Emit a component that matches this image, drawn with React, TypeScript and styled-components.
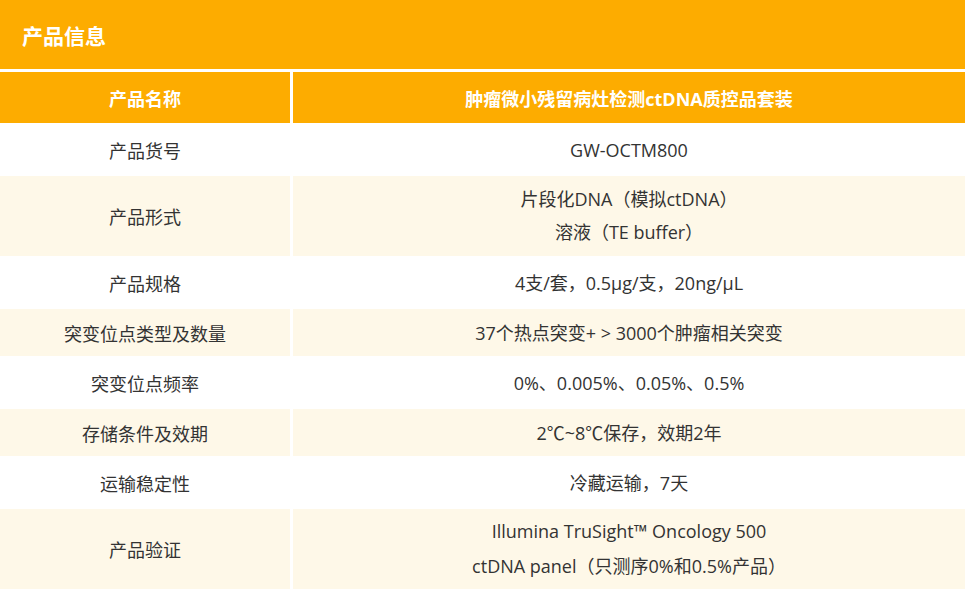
import React from "react";
import styled, { createGlobalStyle } from "styled-components";

const Global = createGlobalStyle`
  html, body { margin: 0; padding: 0; background: #ffffff; }
  body { font-family: "Open Sans", "Noto Sans CJK SC", sans-serif; color: #333333; }
`;

const Page = styled.div`
  width: 965px;
  display: flex;
  flex-direction: column;
  gap: 3px;
`;

const TitleBar = styled.div`
  height: 69px;
  background: #fdac00;
  display: flex;
  align-items: center;
  padding-left: 22px;
  box-sizing: border-box;
  color: #ffffff;
  font-size: 21px;
  font-weight: 700;
`;

const Row = styled.div<{ $h: number }>`
  display: grid;
  grid-template-columns: 290px 1fr;
  column-gap: 3px;
  height: ${(p) => p.$h}px;
`;

const Cell = styled.div<{ $variant: "head" | "cream" | "white" }>`
  display: flex;
  flex-direction: column;
  align-items: center;
  justify-content: center;
  text-align: center;
  font-size: 18px;
  background: ${(p) =>
    p.$variant === "head" ? "#fdac00" : p.$variant === "cream" ? "#fef8e8" : "#ffffff"};
  color: ${(p) => (p.$variant === "head" ? "#ffffff" : "#333333")};
  font-weight: ${(p) => (p.$variant === "head" ? 700 : 400)};
`;

const Line = styled.div<{ $lh: number }>`
  line-height: ${(p) => p.$lh}px;
`;

type RowData = { label: string; value: string[]; lh?: number };

const rows: RowData[] = [
  { label: "产品货号", value: ["GW-OCTM800"] },
  { label: "产品形式", value: ["片段化DNA（模拟ctDNA）", "溶液（TE buffer）"], lh: 33 },
  { label: "产品规格", value: ["4支/套，0.5μg/支，20ng/μL"] },
  { label: "突变位点类型及数量", value: ["37个热点突变+ > 3000个肿瘤相关突变"] },
  { label: "突变位点频率", value: ["0%、0.005%、0.05%、0.5%"] },
  { label: "存储条件及效期", value: ["2℃~8℃保存，效期2年"] },
  { label: "运输稳定性", value: ["冷藏运输，7天"] },
  {
    label: "产品验证",
    value: ["Illumina TruSight™ Oncology 500", "ctDNA panel（只测序0%和0.5%产品）"],
    lh: 35,
  },
];

export default function App() {
  return (
    <>
      <Global />
      <Page>
        <TitleBar>产品信息</TitleBar>
        <Row $h={51}>
          <Cell $variant="head">产品名称</Cell>
          <Cell $variant="head">肿瘤微小残留病灶检测ctDNA质控品套装</Cell>
        </Row>
        {rows.map((r, i) => {
          const variant = i % 2 === 0 ? "white" : "cream";
          const h = r.value.length > 1 ? 80 : 47;
          return (
            <Row key={r.label} $h={h}>
              <Cell $variant={variant}>{r.label}</Cell>
              <Cell $variant={variant}>
                {r.value.map((v) => (
                  <Line key={v} $lh={r.lh ?? 24}>
                    {v}
                  </Line>
                ))}
              </Cell>
            </Row>
          );
        })}
      </Page>
    </>
  );
}
